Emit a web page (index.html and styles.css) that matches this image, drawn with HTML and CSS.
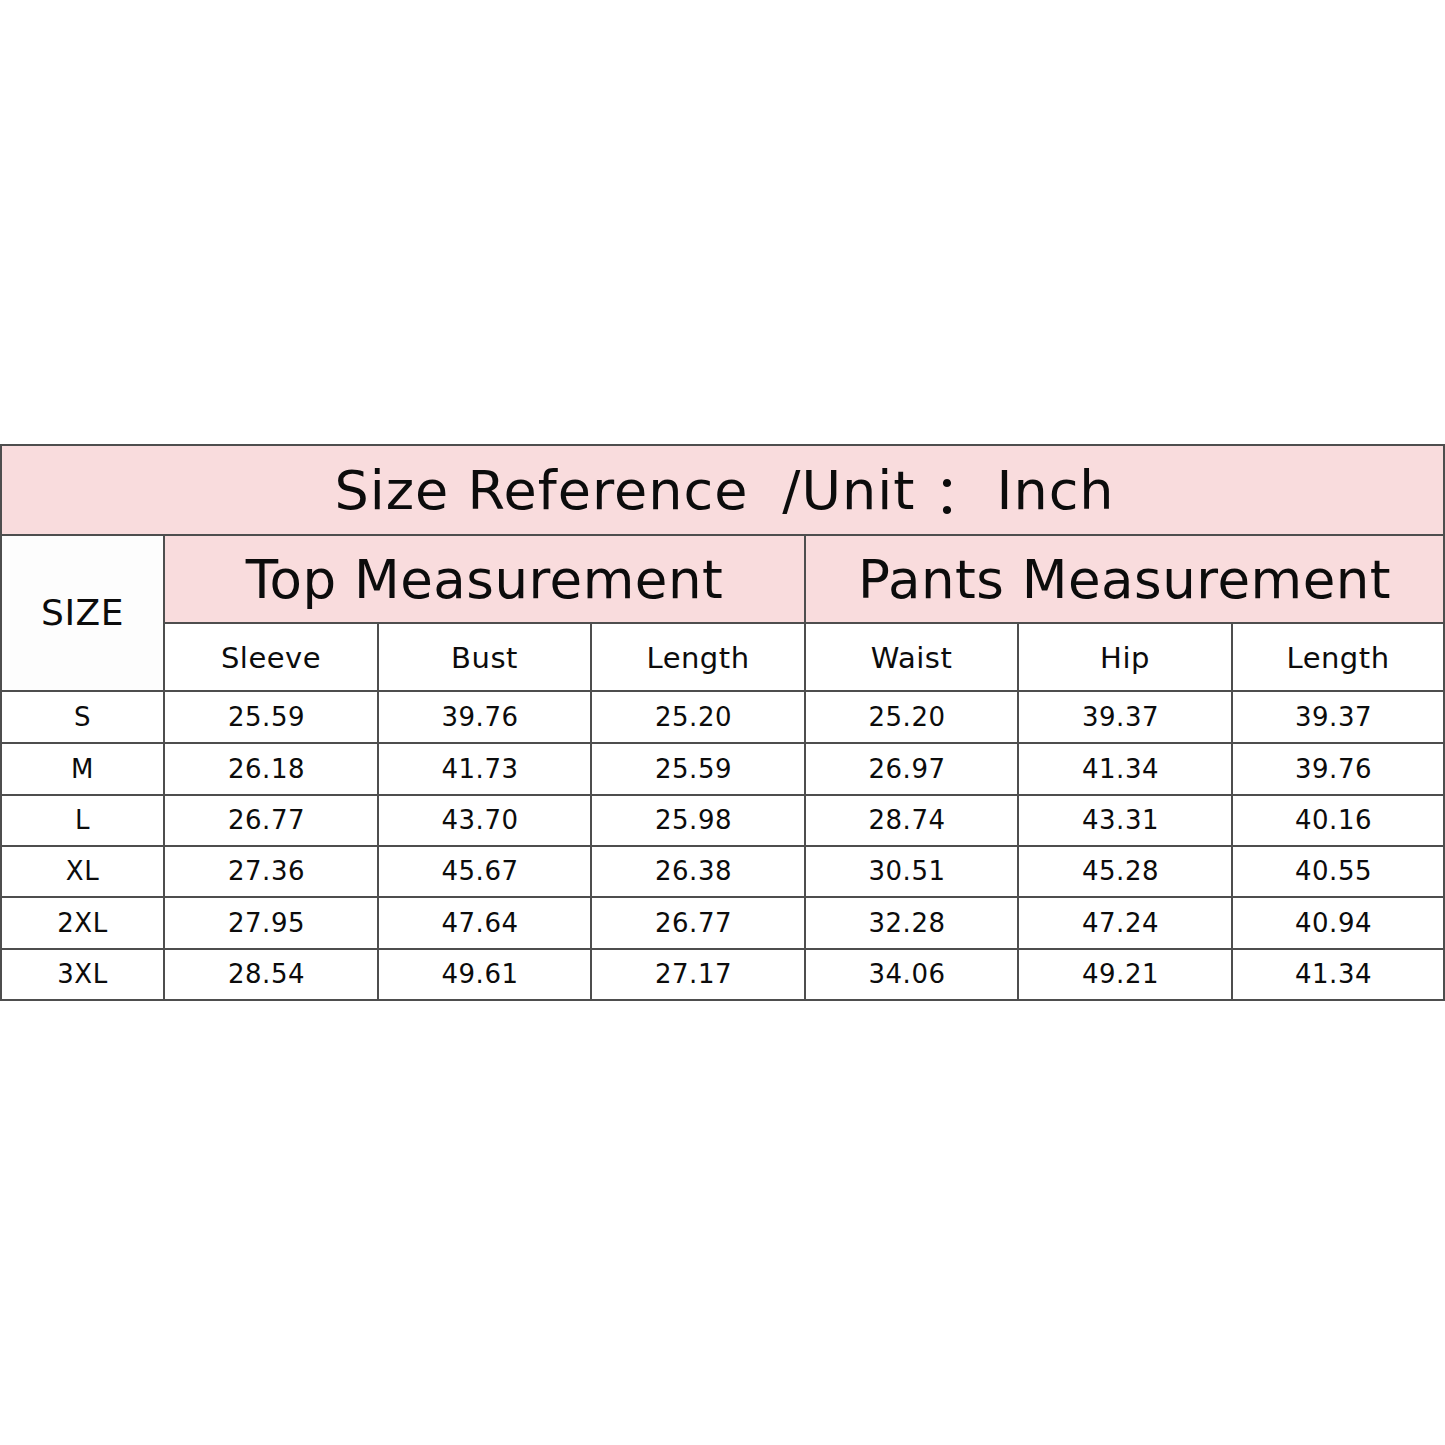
FILE: index.html
```html
<!DOCTYPE html>
<html>
<head>
<meta charset="utf-8">
<link rel="stylesheet" href="styles.css">
</head>
<body>
<div class="page">
  <div class="chart">
    <div class="cell title">Size Reference<span class="gap"></span>/Unit<span class="colon">：</span>Inch</div>
    <div class="cell size-label">SIZE</div>
    <div class="cell group top">Top Measurement</div>
    <div class="cell group pants">Pants Measurement</div>
    <div class="cell head">Sleeve</div>
    <div class="cell head">Bust</div>
    <div class="cell head">Length</div>
    <div class="cell head">Waist</div>
    <div class="cell head">Hip</div>
    <div class="cell head">Length</div>

    <div class="cell">S</div><div class="cell num">25.59</div><div class="cell num">39.76</div><div class="cell num">25.20</div><div class="cell num">25.20</div><div class="cell num">39.37</div><div class="cell num">39.37</div>
    <div class="cell">M</div><div class="cell num">26.18</div><div class="cell num">41.73</div><div class="cell num">25.59</div><div class="cell num">26.97</div><div class="cell num">41.34</div><div class="cell num">39.76</div>
    <div class="cell">L</div><div class="cell num">26.77</div><div class="cell num">43.70</div><div class="cell num">25.98</div><div class="cell num">28.74</div><div class="cell num">43.31</div><div class="cell num">40.16</div>
    <div class="cell">XL</div><div class="cell num">27.36</div><div class="cell num">45.67</div><div class="cell num">26.38</div><div class="cell num">30.51</div><div class="cell num">45.28</div><div class="cell num">40.55</div>
    <div class="cell">2XL</div><div class="cell num">27.95</div><div class="cell num">47.64</div><div class="cell num">26.77</div><div class="cell num">32.28</div><div class="cell num">47.24</div><div class="cell num">40.94</div>
    <div class="cell">3XL</div><div class="cell num">28.54</div><div class="cell num">49.61</div><div class="cell num">27.17</div><div class="cell num">34.06</div><div class="cell num">49.21</div><div class="cell num">41.34</div>
  </div>
</div>
</body>
</html>
```
FILE: styles.css
```css
html, body {
  margin: 0;
  padding: 0;
  background: #ffffff;
}
.page {
  height: 1445px;
  display: flex;
  align-items: center;
  justify-content: flex-start;
}
.chart {
  display: grid;
  grid-template-columns: 161px 212px 211px 212px 211px 212px 210px;
  grid-template-rows: 88px 86px 66px 50px 50px 49px 49px 50px 49px;
  gap: 2px;
  padding: 2px;
  background: #4e4e4e;
  width: 1445px;
  box-sizing: border-box;
  margin-top: -1px;
  font-family: "DejaVu Sans", "Noto Sans CJK SC", sans-serif;
  color: #0c0c0c;
}
.cell {
  background: #ffffff;
  display: flex;
  align-items: center;
  justify-content: center;
  font-size: 26px;
  letter-spacing: 0.5px;
}
.num {
  padding-right: 9px;
}
.title {
  grid-column: 1 / -1;
  background: #f9dcdd;
  font-size: 54px;
  padding-top: 2px;
  padding-left: 4px;
  letter-spacing: 1px;
}
.gap {
  display: inline-block;
  width: 34px;
}
.colon {
  margin: 0 8px 0 18px;
}
.size-label {
  grid-column: 1;
  grid-row: 2 / 4;
  background: #fdfdfd;
  font-size: 36px;
  letter-spacing: 0.5px;
}
.group {
  background: #f9dcdd;
  font-size: 53px;
  padding-top: 2px;
}
.top { grid-column: 2 / 5; }
.pants { grid-column: 5 / 8; }
.head {
  font-size: 29px;
  padding-top: 2px;
}
```
